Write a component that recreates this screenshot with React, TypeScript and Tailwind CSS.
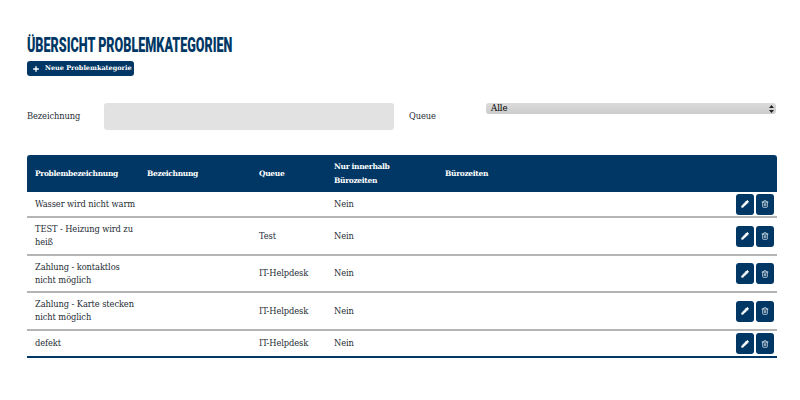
import React from "react";
import { Plus, Pencil, Trash2 } from "lucide-react";

const rows: [string, string, string, string, string][] = [
  ["Wasser wird nicht warm", "", "", "Nein", "h-[26px]"],
  ["TEST - Heizung wird zu heiß", "", "Test", "Nein", "h-[38px]"],
  ["Zahlung - kontaktlos nicht möglich", "", "IT-Helpdesk", "Nein", "h-[37px]"],
  ["Zahlung - Karte stecken nicht möglich", "", "IT-Helpdesk", "Nein", "h-[38px]"],
  ["defekt", "", "IT-Helpdesk", "Nein", "h-[25px]"],
];

const cols = "grid grid-cols-[112px_112px_75px_111px_1fr_auto] items-center";

function IconBtn({ children }: { children: React.ReactNode }) {
  return (
    <span className="flex h-[21px] w-[18px] items-center justify-center rounded-[3px] bg-[#003764] text-white">
      {children}
    </span>
  );
}

export default function App() {
  return (
    <div className="h-[400px] w-[800px] overflow-hidden bg-white pl-[27px] pr-[23px] pt-[35px] font-['Roboto_Slab','DejaVu_Serif',serif] text-[#262e36]">
      <h1 className="h-[20px] origin-left scale-x-[0.63] whitespace-nowrap font-['Roboto','Liberation_Sans',sans-serif] text-[20px] font-black leading-[20px] text-[#003764]">
        ÜBERSICHT PROBLEMKATEGORIEN
      </h1>
      <div className="mt-[6px] flex h-[15px] w-[107px] items-center rounded-[3px] bg-[#003764] pl-[5px] text-[6.5px] font-bold text-white">
        <Plus size={8} strokeWidth={4} className="shrink-0" />
        <span className="ml-[5px] whitespace-nowrap">Neue Problemkategorie</span>
      </div>

      <div className="mt-[27px] flex items-start text-[8.3px] tracking-[-0.1px]">
        <label className="flex h-[26px] w-[77px] items-center">Bezeichnung</label>
        <div className="h-[27px] w-[290px] rounded-[3px] bg-[#e2e2e2]" />
        <label className="ml-[15px] flex h-[26px] w-[77px] items-center">Queue</label>
        <div className="flex h-[11px] w-[290px] items-center justify-between rounded-[3px] bg-gradient-to-b from-[#dcdcdc] to-[#cbcbcb] pl-[5px] pr-[2px] text-[8.5px] tracking-normal text-black">
          <span>Alle</span>
          <svg width="5" height="8" viewBox="0 0 5 8" fill="#222">
            <path d="M2.5 0 5 3H0zM2.5 8 0 5h5z" />
          </svg>
        </div>
      </div>

      <div className="mt-[25px]">
        <div className={`${cols} h-[37px] rounded-t-[3px] bg-[#003764] pl-[8px] text-[7.5px] font-bold leading-[14px] tracking-[-0.33px] text-white`}>
          <span>Problembezeichnung</span>
          <span>Bezeichnung</span>
          <span>Queue</span>
          <span className="w-[70px] pt-[1px]">Nur innerhalb Bürozeiten</span>
          <span>Bürozeiten</span>
          <span />
        </div>
        {rows.map(([name, label, queue, hours, h], i) => (
          <div
            key={name}
            className={`${cols} ${h} pl-[8px] pr-[3px] text-[8.3px] leading-[13px] tracking-[-0.1px] ${
              i === rows.length - 1 ? "box-content border-b-[2px] border-[#003764]" : "border-b-[2px] border-[#b4b4b4]"
            }`}
          >
            <span className="w-[102px]">{name}</span>
            <span>{label}</span>
            <span>{queue}</span>
            <span>{hours}</span>
            <span />
            <span className="flex gap-[2px]">
              <IconBtn>
                <Pencil size={8} strokeWidth={3} fill="white" />
              </IconBtn>
              <IconBtn>
                <Trash2 size={8} strokeWidth={2} />
              </IconBtn>
            </span>
          </div>
        ))}
      </div>
    </div>
  );
}
